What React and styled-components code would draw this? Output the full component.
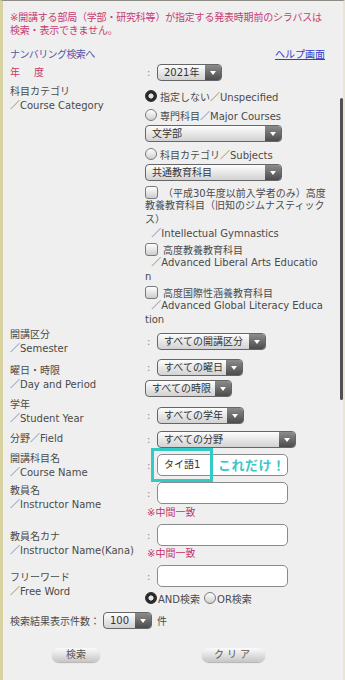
import React from 'react';
import styled, { createGlobalStyle } from 'styled-components';

const Global = createGlobalStyle`
  html, body { margin: 0; padding: 0; background: #efefef; }
  body {
    font-family: "DejaVu Sans", "Noto Sans CJK JP", sans-serif;
    font-size: 10px;
    color: #4a4a4a;
  }
  * { box-sizing: border-box; }
`;

const Page = styled.div`
  position: relative;
  width: 345px;
  min-height: 680px;
  border-top: 1px solid #8c8c84;
  border-left: 3px solid #d8d2a0;
  border-right: 2px solid #e8e5d5;
  background: #efefef;
  padding: 10px 0 0 7px;
`;

const ScrollThumb = styled.div`
  position: absolute;
  right: 0;
  top: 97px;
  width: 3px;
  height: 302px;
  border-radius: 2px;
  background: #505050;
`;

const Notice = styled.div`
  color: #c63b72;
  line-height: 13px;
  letter-spacing: -0.2px;
`;

const Line = styled.span`
  display: block;
  white-space: nowrap;
  height: ${p => p.$h || 14}px;
  line-height: ${p => p.$h || 14}px;
`;

const LinkRow = styled.div`
  display: flex;
  justify-content: space-between;
  width: 315px;
  margin-top: 11px;
  line-height: 14px;
`;

const NavLink = styled.span`
  color: #5656a8;
  letter-spacing: -0.6px;
`;

const HelpLink = styled.span`
  color: #3a3ac8;
  text-decoration: underline;
`;

const Row = styled.div`
  display: flex;
  align-items: flex-start;
  margin-top: ${p => p.$mt || 0}px;
`;

const Label = styled.div`
  width: 135px;
  flex: none;
  padding-top: ${p => p.$pt || 0}px;
  line-height: 13.5px;
  white-space: nowrap;
  color: ${p => (p.$red ? '#c63b68' : '#4a4a4a')};
  letter-spacing: ${p => (p.$red ? '2px' : '0')};
`;

const Value = styled.div`
  display: flex;
  flex-direction: column;
  align-items: flex-start;
  padding-top: ${p => p.$pt || 0}px;
`;

const Field = styled.div`
  display: flex;
  align-items: center;
  margin-top: ${p => p.$mt || 0}px;
`;

const Colon = styled.span`
  width: 12px;
  padding-left: 2px;
  color: #8a8a8a;
`;

const SelectBox = styled.div`
  display: flex;
  align-items: stretch;
  width: ${p => p.$w}px;
  height: 17px;
  border: 1px solid #666;
  border-radius: 4px;
  overflow: hidden;
  background: linear-gradient(#fdfdfd, #d2d2d2);
  margin-top: ${p => p.$mt || 0}px;
`;

const SelectText = styled.span`
  flex: 1;
  padding-left: 6px;
  line-height: 15px;
  color: #333;
  white-space: nowrap;
`;

const SelectBtn = styled.span`
  width: 16px;
  flex: none;
  display: flex;
  align-items: center;
  justify-content: center;
  background: linear-gradient(#8c8c8c, #4c4c4c);
  &::after {
    content: '';
    width: 0;
    height: 0;
    border-left: 3px solid transparent;
    border-right: 3px solid transparent;
    border-top: 4px solid #fff;
  }
`;

const Select = ({ w, mt, children }) => (
  <SelectBox $w={w} $mt={mt}>
    <SelectText>{children}</SelectText>
    <SelectBtn />
  </SelectBox>
);

const RadioLine = styled.label`
  display: flex;
  align-items: center;
  height: 16px;
  margin-top: ${p => p.$mt || 0}px;
  white-space: nowrap;
  color: #4a4a4a;
`;

const RadioDot = styled.span`
  width: 12px;
  height: 12px;
  flex: none;
  border-radius: 50%;
  border: 1px solid ${p => (p.$on ? '#2a2a2a' : '#7a7a7a')};
  background: ${p =>
    p.$on
      ? 'radial-gradient(circle, #e4e4e4 0 2.2px, #2a2a2a 2.9px)'
      : 'linear-gradient(#ffffff, #cfcfcf)'};
  margin-left: ${p => p.$ml || 0}px;
  margin-right: ${p => p.$gap ?? 3}px;
`;

const CheckBlock = styled.div`
  margin-top: ${p => p.$mt || 0}px;
  color: #4a4a4a;
`;

const CheckLine = styled.div`
  display: flex;
  align-items: center;
  height: 14px;
  white-space: nowrap;
`;

const CheckBox = styled.span`
  width: 13px;
  height: 13px;
  flex: none;
  border-radius: 3px;
  border: 1px solid #7a7a7a;
  background: linear-gradient(#ffffff, #cdcdcd);
  margin-right: 5px;
`;

const InputWrap = styled.div`
  position: relative;
`;

const TextInput = styled.div`
  width: 131px;
  height: 22px;
  border: 1px solid #8a8a8a;
  border-radius: 5px;
  background: #fff;
  padding-left: 6px;
  line-height: 20px;
  color: #333;
`;

const Highlight = styled.div`
  position: absolute;
  left: -6px;
  top: -6px;
  width: 62px;
  height: 34px;
  border: 3px solid #33c9c4;
`;

const Callout = styled.span`
  position: absolute;
  left: 61px;
  top: 0;
  line-height: 22px;
  font-family: "Noto Sans CJK JP", sans-serif;
  font-weight: 700;
  font-size: 13px;
  color: #3cc6c8;
  letter-spacing: 0.5px;
  white-space: nowrap;
`;

const Hint = styled.div`
  color: #c4306a;
  line-height: 13px;
  margin-top: ${p => p.$mt || 0}px;
  padding-left: 2px;
`;

const CountRow = styled.div`
  display: flex;
  align-items: center;
  margin-top: ${p => p.$mt || 0}px;
  color: #4a4a4a;
  gap: 3px;
`;

const Unit = styled.span`
  margin-left: 2px;
`;

const ButtonRow = styled.div`
  display: flex;
  gap: 102px;
  padding-left: 42px;
  margin-top: 19px;
`;

const Button = styled.button`
  width: ${p => p.$w}px;
  height: 14px;
  padding: 0;
  border: none;
  border-radius: 7px;
  background: linear-gradient(#fbfbfb, #c6c6c6);
  box-shadow: 0 1px 1px rgba(0, 0, 0, 0.25);
  font-family: "DejaVu Sans", "Noto Sans CJK JP", sans-serif;
  font-size: 10px;
  line-height: 14px;
  color: #555;
  letter-spacing: ${p => p.$ls || 0}px;
`;

export default function App() {
  return (
    <>
      <Global />
      <Page>
        <ScrollThumb />
        <Notice>
          <Line $h={13}>※開講する部局（学部・研究科等）が指定する発表時期前のシラバスは</Line>
          <Line $h={13}>検索・表示できません。</Line>
        </Notice>
        <LinkRow>
          <NavLink>ナンバリング検索へ</NavLink>
          <HelpLink>ヘルプ画面</HelpLink>
        </LinkRow>

        <Row $mt={2}>
          <Label $pt={2} $red>年　度</Label>
          <Value>
            <Field>
              <Colon>:</Colon>
              <Select w={65}>2021年</Select>
            </Field>
          </Value>
        </Row>

        <Row $mt={4}>
          <Label>
            科目カテゴリ
            <br />
            ／Course Category
          </Label>
          <Value $pt={3}>
            <RadioLine>
              <RadioDot $on />
              指定しない／Unspecified
            </RadioLine>
            <RadioLine $mt={3}>
              <RadioDot />
              専門科目／Major Courses
            </RadioLine>
            <Select w={137} mt={2}>文学部</Select>
            <RadioLine $mt={4}>
              <RadioDot />
              科目カテゴリ／Subjects
            </RadioLine>
            <Select w={137} mt={2}>共通教育科目</Select>
            <CheckBlock $mt={4}>
              <CheckLine>
                <CheckBox />
                （平成30年度以前入学者のみ）高度
              </CheckLine>
              <Line>教養教育科目（旧知のジムナスティック</Line>
              <Line>ス）</Line>
              <Line>{'\u00a0\u00a0'}／Intellectual Gymnastics</Line>
            </CheckBlock>
            <CheckBlock $mt={1}>
              <CheckLine>
                <CheckBox />
                高度教養教育科目
              </CheckLine>
              <Line>{'\u00a0\u00a0'}／Advanced Liberal Arts Educatio</Line>
              <Line>n</Line>
            </CheckBlock>
            <CheckBlock $mt={1}>
              <CheckLine>
                <CheckBox />
                高度国際性涵養教育科目
              </CheckLine>
              <Line>{'\u00a0\u00a0'}／Advanced Global Literacy Educa</Line>
              <Line>tion</Line>
            </CheckBlock>
          </Value>
        </Row>

        <Row $mt={1}>
          <Label>
            開講区分
            <br />
            ／Semester
          </Label>
          <Value $pt={5}>
            <Field>
              <Colon>:</Colon>
              <Select w={109}>すべての開講区分</Select>
            </Field>
          </Value>
        </Row>

        <Row $mt={4}>
          <Label $pt={5}>
            曜日・時限
            <br />
            ／Day and Period
          </Label>
          <Value>
            <Field>
              <Colon>:</Colon>
              <Select w={86}>すべての曜日</Select>
            </Field>
            <Select w={87} mt={4}>すべての時限</Select>
          </Value>
        </Row>

        <Row $mt={1}>
          <Label>
            学年
            <br />
            ／Student Year
          </Label>
          <Value $pt={9}>
            <Field>
              <Colon>:</Colon>
              <Select w={87}>すべての学年</Select>
            </Field>
          </Value>
        </Row>

        <Row $mt={6}>
          <Label $pt={1}>分野／Field</Label>
          <Value>
            <Field>
              <Colon>:</Colon>
              <Select w={139}>すべての分野</Select>
            </Field>
          </Value>
        </Row>

        <Row $mt={4}>
          <Label>
            開講科目名
            <br />
            ／Course Name
          </Label>
          <Value $pt={2}>
            <Field>
              <Colon>:</Colon>
              <InputWrap>
                <TextInput>タイ語1</TextInput>
                <Highlight />
                <Callout>これだけ！</Callout>
              </InputWrap>
            </Field>
          </Value>
        </Row>

        <Row $mt={3}>
          <Label $pt={2}>
            教員名
            <br />
            ／Instructor Name
          </Label>
          <Value>
            <Field>
              <Colon>:</Colon>
              <TextInput />
            </Field>
            <Hint $mt={2}>※中間一致</Hint>
          </Value>
        </Row>

        <Row $mt={5}>
          <Label $pt={6}>
            教員名カナ
            <br />
            ／Instructor Name(Kana)
          </Label>
          <Value>
            <Field>
              <Colon>:</Colon>
              <TextInput />
            </Field>
            <Hint $mt={1}>※中間一致</Hint>
          </Value>
        </Row>

        <Row $mt={5}>
          <Label $pt={6}>
            フリーワード
            <br />
            ／Free Word
          </Label>
          <Value>
            <Field>
              <Colon>:</Colon>
              <TextInput />
            </Field>
            <RadioLine $mt={3}>
              <RadioDot $on $gap={1} />
              AND検索
              <RadioDot $gap={1} $ml={4} />
              OR検索
            </RadioLine>
          </Value>
        </Row>

        <CountRow $mt={6}>
          検索結果表示件数：
          <Select w={49}>100</Select>
          <Unit>件</Unit>
        </CountRow>

        <ButtonRow>
          <Button $w={48}>検索</Button>
          <Button $w={63} $ls={3}>クリア</Button>
        </ButtonRow>
      </Page>
    </>
  );
}
